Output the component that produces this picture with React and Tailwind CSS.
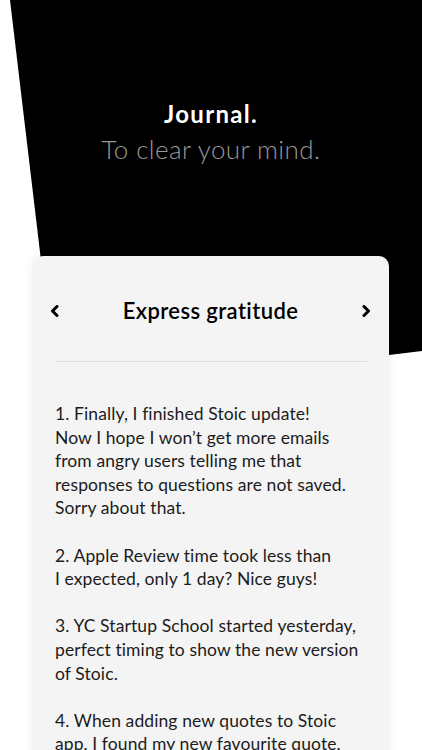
import React from "react";

const ENTRIES = [
  [
    "1. Finally, I finished Stoic update!",
    "Now I hope I won’t get more emails",
    "from angry users telling me that",
    "responses to questions are not saved.",
    "Sorry about that.",
  ],
  ["2. Apple Review time took less than", "I expected, only 1 day? Nice guys!"],
  [
    "3. YC Startup School started yesterday,",
    "perfect timing to show the new version",
    "of Stoic.",
  ],
  ["4. When adding new quotes to Stoic", "app, I found my new favourite quote."],
];

function Chevron({ direction }) {
  const points = direction === "left" ? "7,1.5 2.5,6 7,10.5" : "2,1.5 6.5,6 2,10.5";
  return (
    <svg width="9" height="12" viewBox="0 0 9 12" fill="none">
      <polyline points={points} stroke="#000" strokeWidth="3" strokeLinecap="round" strokeLinejoin="round" />
    </svg>
  );
}

export default function App() {
  return (
    <div
      className="relative h-[750px] w-full overflow-hidden bg-white"
      style={{ fontFamily: "Lato, 'Open Sans', sans-serif" }}
    >
      <svg className="absolute inset-0 h-[750px] w-[422px]" viewBox="0 0 422 750">
        <polygon points="10,0 422,0 422,351 57,395" fill="#000" />
      </svg>

      <div className="relative flex flex-col items-center pt-[100px]">
        <h1 className="text-[24px] font-bold leading-[28px] tracking-[1.3px] text-white">Journal.</h1>
        <p className="mt-[7px] text-[26px] font-light leading-[28px] tracking-[0.4px] text-[#989898]">
          To clear your mind.
        </p>
      </div>

      <div className="relative ml-[33px] mt-[93px] h-[600px] w-[356px] rounded-[10px] bg-[#f4f4f4] shadow-[0_0_12px_rgba(0,0,0,0.08)]">
        <div className="flex items-center justify-between pl-[17px] pr-[18px] pt-[43px] pb-[38px]">
          <Chevron direction="left" />
          <h2 className="text-[22px] font-semibold leading-[24px] tracking-[0.4px] text-black">Express gratitude</h2>
          <Chevron direction="right" />
        </div>
        <div className="mx-[22px] h-px bg-[#dedede]" />
        <div className="px-[22px] pt-[40px] text-[17.5px] leading-[23.6px] tracking-[0.1px] text-[#1c1c1c]">
          {ENTRIES.map((lines, i) => (
            <p key={i} className="mb-[23.6px] whitespace-nowrap">
              {lines.map((line, j) => (
                <span key={j} className="block">
                  {line}
                </span>
              ))}
            </p>
          ))}
        </div>
      </div>
    </div>
  );
}
